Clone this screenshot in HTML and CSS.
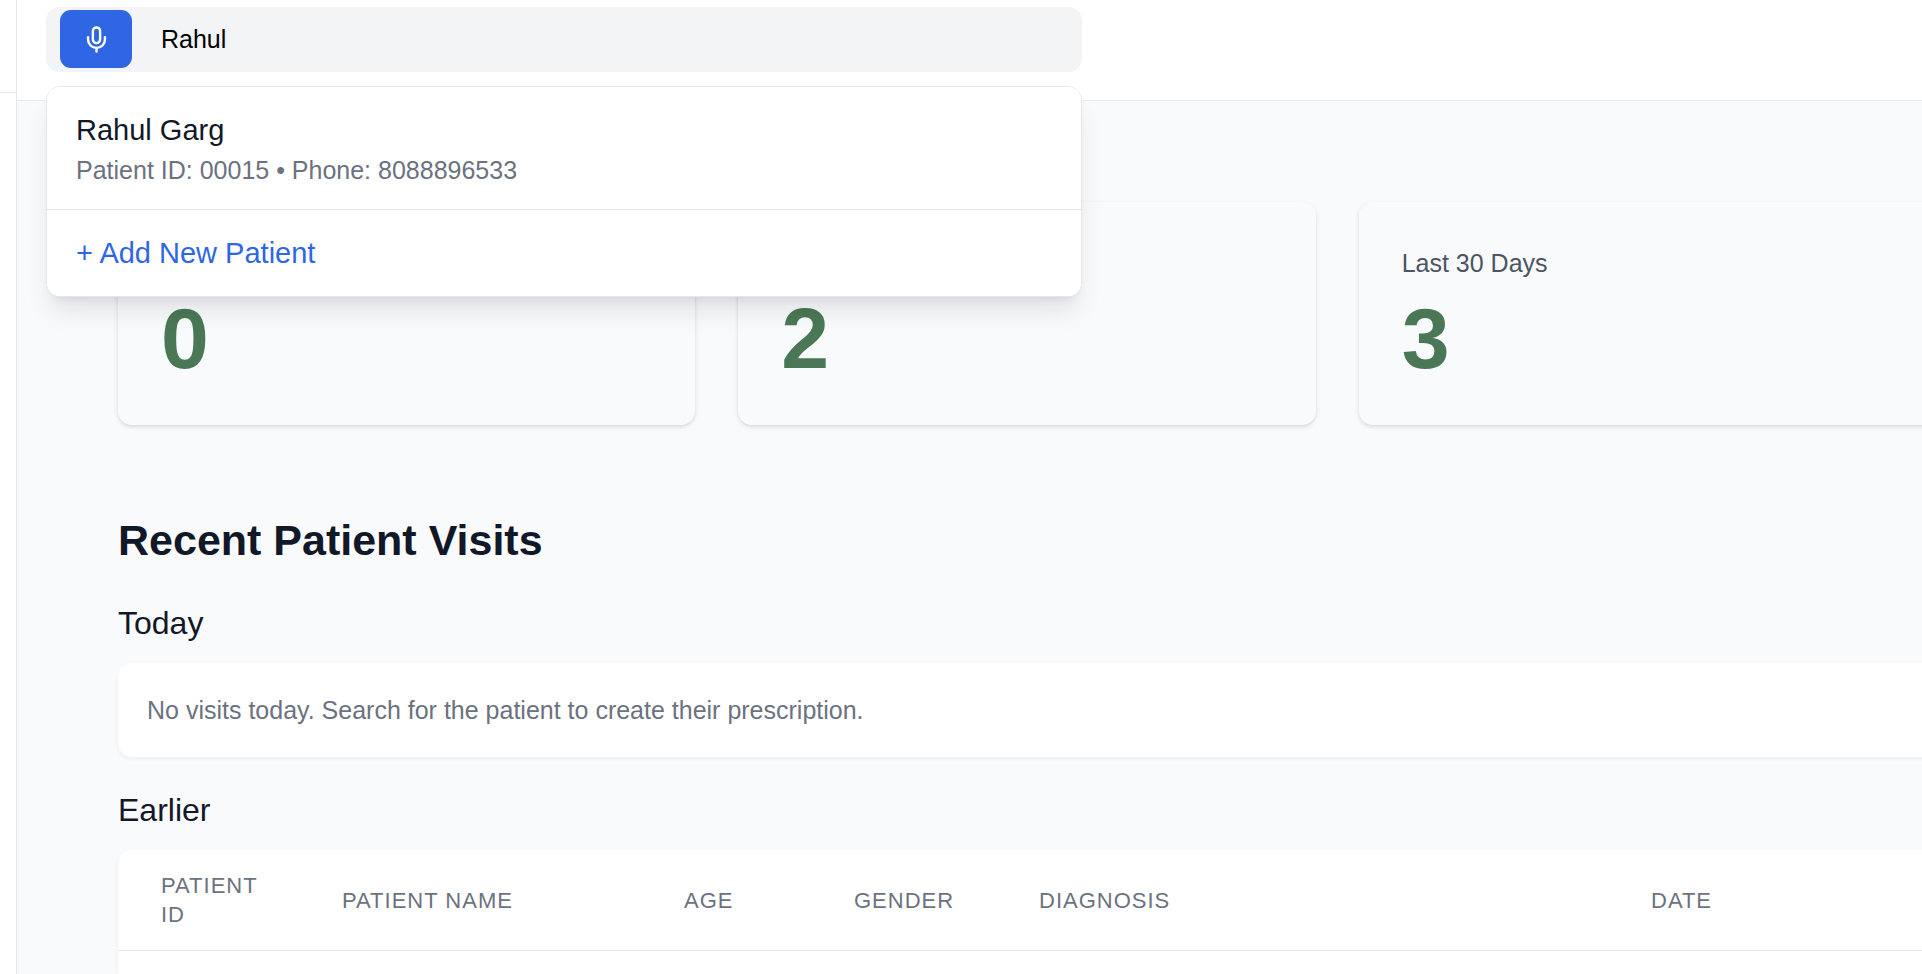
FILE: index.html
```html
<!DOCTYPE html>
<html lang="en">
<head>
    <meta charset="UTF-8">
    <meta name="viewport" content="width=device-width, initial-scale=1.0">
    <title>Patient Dashboard</title>
    <link rel="stylesheet" href="styles.css">
</head>
<body>
    <div class="layout">
        <aside class="sidebar">
            <div class="sidebar-top"></div>
        </aside>

        <div class="page">
            <header class="header">
                <div class="search">
                    <div class="search-box">
                        <button class="mic-button" type="button" aria-label="Voice search">
                            <svg class="mic-icon" viewBox="0 0 24 24" fill="none" stroke="currentColor" stroke-width="2" stroke-linecap="round" stroke-linejoin="round">
                                <path d="M12 2a3 3 0 0 0-3 3v7a3 3 0 0 0 6 0V5a3 3 0 0 0-3-3Z"/>
                                <path d="M19 10v2a7 7 0 0 1-14 0v-2"/>
                                <line x1="12" x2="12" y1="19" y2="22"/>
                            </svg>
                        </button>
                        <input class="search-input" type="text" value="Rahul" aria-label="Search patients">
                    </div>
                    <div class="results">
                        <button class="result" type="button">
                            <span class="result-name">Rahul Garg</span>
                            <span class="result-info">Patient ID: 00015 • Phone: 8088896533</span>
                        </button>
                        <button class="result add-patient" type="button">+ Add New Patient</button>
                    </div>
                </div>
            </header>

            <main class="content">
                <section class="stats">
                    <div class="stat-card">
                        <p class="stat-value">0</p>
                    </div>
                    <div class="stat-card">
                        <p class="stat-value">2</p>
                    </div>
                    <div class="stat-card">
                        <p class="stat-label">Last 30 Days</p>
                        <p class="stat-value">3</p>
                    </div>
                </section>

                <h2>Recent Patient Visits</h2>

                <h3>Today</h3>
                <div class="panel empty">No visits today. Search for the patient to create their prescription.</div>

                <h3>Earlier</h3>
                <div class="panel visits">
                    <table>
                        <colgroup>
                            <col class="col-id">
                            <col class="col-name">
                            <col class="col-age">
                            <col class="col-gender">
                            <col class="col-diagnosis">
                            <col>
                        </colgroup>
                        <thead>
                            <tr>
                                <th>Patient ID</th>
                                <th>Patient Name</th>
                                <th>Age</th>
                                <th>Gender</th>
                                <th>Diagnosis</th>
                                <th>Date</th>
                            </tr>
                        </thead>
                    </table>
                </div>
            </main>
        </div>
    </div>
</body>
</html>
```
FILE: styles.css
```css
* {
    box-sizing: border-box;
}
body {
    margin: 0;
    background: #f9fafc;
    color: #111827;
    font-family: "Liberation Sans", Arial, sans-serif;
    font-size: 25px;
    line-height: 36px;
}
h2, h3, p {
    margin: 0;
}
button, input {
    font: inherit;
    border: none;
}
button {
    cursor: pointer;
}
.layout {
    display: flex;
    height: 100vh;
    overflow: hidden;
}
.sidebar {
    flex: none;
    width: 17px;
    background: white;
    border-right: 1px solid #e5e7eb;
}
.sidebar-top {
    height: 93px;
    border-bottom: 1px solid #e5e7eb;
}
.page {
    flex: 1;
    min-width: 0;
    display: flex;
    flex-direction: column;
}
.header {
    flex: none;
    padding: 7px 29px 28px;
    background: white;
    border-bottom: 1px solid #e5e7eb;
}
.search {
    position: relative;
    max-width: 1036px;
}
.search-box {
    display: flex;
    padding: 3px 14px 4px;
    background: #f3f4f6;
    border-radius: 14px;
}
.mic-button {
    display: flex;
    align-items: center;
    justify-content: center;
    width: 72px;
    height: 58px;
    padding: 0;
    background: #2f66e3;
    color: white;
    border-radius: 11px;
}
.mic-icon {
    width: 29px;
    height: 29px;
}
.search-input {
    flex: 1;
    min-width: 0;
    padding: 0 29px;
    background: transparent;
    outline: none;
}

/* search results dropdown */
.results {
    position: absolute;
    top: 79px;
    left: 0;
    right: 0;
    z-index: 10;
    background: white;
    border: 1px solid #e5e7eb;
    border-radius: 14px;
    box-shadow: 0 18px 27px -5px rgba(0,0,0,0.1), 0 7px 11px -7px rgba(0,0,0,0.1);
    overflow: hidden;
}
.result {
    display: block;
    width: 100%;
    padding: 22px 29px 21px;
    background: white;
    color: #111827;
    font-size: 29px;
    line-height: 43px;
    text-align: left;
}
.result + .result {
    border-top: 1px solid #e5e7eb;
}
.result-name, .result-info {
    display: block;
}
.result-info {
    color: #6b7280;
    font-size: 25px;
    line-height: 36px;
}
.add-patient {
    color: #2f66e3;
}

/* last column runs past the right edge of the window */
.content {
    flex: 1;
    display: flex;
    flex-direction: column;
    padding-top: 101px;
    margin-left: 101px;
    margin-right: -14px;
}
.stats {
    display: grid;
    grid-template-columns: repeat(3, 1fr);
    gap: 43px;
    margin-bottom: 86px;
}
.stat-card {
    display: flex;
    flex-direction: column;
    justify-content: flex-end;
    padding: 43px;
    border-radius: 14px;
    box-shadow: 0 2px 5px rgba(0,0,0,0.1), 0 2px 4px -2px rgba(0,0,0,0.1);
}
.stat-label {
    color: #4b5563;
}
.stat-value {
    margin-top: 14px;
    color: #4a7856;
    font-size: 86px;
    font-weight: bold;
    line-height: 87px;
}
h2 {
    font-size: 43px;
    line-height: 58px;
    margin-bottom: 29px;
}
h3 {
    font-size: 32px;
    font-weight: normal;
    line-height: 50px;
    margin-bottom: 15px;
}
.panel {
    background: white;
    border-radius: 14px;
    box-shadow: 0 2px 4px rgba(0,0,0,0.05);
}
.empty {
    padding: 29px;
    margin-bottom: 28px;
    color: #6b7280;
}
.visits {
    flex: 1;
    border-radius: 14px 14px 0 0;
}
table {
    width: 100%;
    table-layout: fixed;
    border-collapse: collapse;
}
th {
    padding: 21px 43px;
    border-bottom: 1px solid #e5e7eb;
    color: #6b7280;
    font-size: 22px;
    font-weight: normal;
    line-height: 29px;
    letter-spacing: 1px;
    text-align: left;
    text-transform: uppercase;
}
.col-id {
    width: 181px;
}
.col-name {
    width: 342px;
}
.col-age {
    width: 170px;
}
.col-gender {
    width: 185px;
}
.col-diagnosis {
    width: 612px;
}
```
